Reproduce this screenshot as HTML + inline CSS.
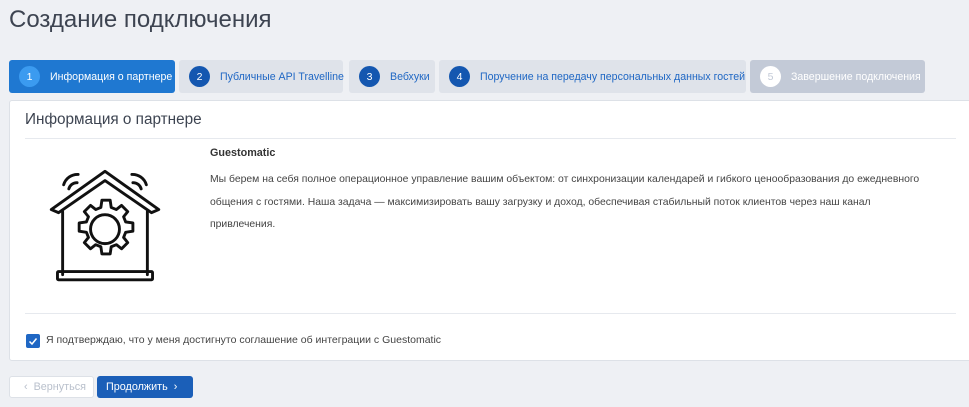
<!DOCTYPE html>
<html><head><meta charset="utf-8"><style>
*{box-sizing:border-box;margin:0;padding:0}
body{width:969px;height:407px;background:#eef0f4;font-family:"Liberation Sans",sans-serif;color:#333;position:relative;overflow:hidden}
h1{position:absolute;left:9px;top:6px;font-size:24px;font-weight:normal;color:#3d4451}
.tab{position:absolute;top:60px;height:33px;border-radius:3px;background:#dfe3ea;color:#1f67c4;font-size:10.6px;display:flex;align-items:center;padding-left:10px;white-space:nowrap}
.tab .c{flex:0 0 21px;width:21px;height:21px;border-radius:50%;background:#1457b0;color:#fff;font-size:10.5px;display:flex;align-items:center;justify-content:center;margin-right:10px}
.tab.a{background:#1f78d1;color:#fff}.tab.a .c{background:#3b9bf0}
.tab.d{background:#c3cad7;color:#fff}.tab.d .c{background:#fff;color:#c3cad7}
.card{position:absolute;left:9px;top:100px;width:970px;height:261px;background:#fff;border:1px solid #dde1e7;border-radius:3px}
.hd{position:absolute;left:15px;top:10px;font-size:15.3px;color:#3d4451}
.ln{position:absolute;left:15px;width:931px;height:1px;background:#e6e9ee}
.nm{position:absolute;left:200px;top:46px;font-size:10.8px;font-weight:bold;color:#333}
.tx{position:absolute;left:200px;top:68px;width:720px;font-size:10.4px;line-height:22.5px;color:#444}
.cb{position:absolute;left:16px;top:233px;width:14px;height:14px;background:#1f67c4;border-radius:2px}
.cl{position:absolute;left:36px;top:233px;font-size:10.5px;color:#444}
.btn{position:absolute;top:376px;height:22px;border-radius:3px;font-size:10.8px;display:flex;align-items:center}
</style></head><body>
<h1>Создание подключения</h1>
<div class="tab a" style="left:9px;width:166px"><span class="c">1</span>Информация о партнере</div>
<div class="tab" style="left:179px;width:164px"><span class="c">2</span>Публичные API Travelline</div>
<div class="tab" style="left:349px;width:86px"><span class="c">3</span>Вебхуки</div>
<div class="tab" style="left:439px;width:307px"><span class="c">4</span>Поручение на передачу персональных данных гостей</div>
<div class="tab d" style="left:750px;width:175px"><span class="c">5</span>Завершение подключения</div>
<div class="card">
<div class="hd">Информация о партнере</div>
<div class="ln" style="top:37px"></div>
<svg style="position:absolute;left:33px;top:65px" width="124" height="116" viewBox="0 0 120 112" fill="none" stroke="#111" stroke-width="2.8" stroke-linejoin="round" stroke-linecap="round">
<path d="M8 42 L60 5 L112 42 L105 45 L60 14 L15 45 Z"/>
<path d="M19 44 V105 M101 44 V105"/>
<rect x="14" y="102" width="92" height="8" rx="1"/>
<path d="M60 33 l5 0 l1 7 l5 2 l5-4 l6 6 l-4 5 l2 5 l7 1 v8 l-7 1 l-2 5 l4 5 l-6 6 l-5-4 l-5 2 l-1 7 h-8 l-1-7 l-5-2 l-5 4 l-6-6 l4-5 l-2-5 l-7-1 v-8 l7-1 l2-5 l-4-5 l6-6 l5 4 l5-2 l1-7 Z"/>
<circle cx="60" cy="61" r="14"/>
<path d="M20 18 a14 14 0 0 1 14-10 M25 22 a8 8 0 0 1 8-6"/>
<path d="M100 18 a14 14 0 0 0 -14-10 M95 22 a8 8 0 0 0 -8-6"/>
</svg>
<div class="nm">Guestomatic</div>
<div class="tx">Мы берем на себя полное операционное управление вашим объектом: от синхронизации календарей и гибкого ценообразования до ежедневного общения с гостями. Наша задача — максимизировать вашу загрузку и доход, обеспечивая стабильный поток клиентов через наш канал привлечения.</div>
<div class="ln" style="top:212px"></div>
<div class="cb"><svg width="14" height="14"><path d="M3.5 7.5 L6 10 L10.5 4.5" stroke="#fff" stroke-width="1.5" fill="none"/></svg></div>
<div class="cl">Я подтверждаю, что у меня достигнуто соглашение об интеграции с Guestomatic</div>
</div>
<div class="btn" style="left:9px;width:85px;background:#fff;border:1px solid #dde1e7;color:#b9c0cc;padding-left:14px">‹&nbsp;&nbsp;Вернуться</div>
<div class="btn" style="left:97px;width:96px;background:#1b5fb8;color:#fff;padding-left:9px">Продолжить&nbsp;&nbsp;›</div>
</body></html>
